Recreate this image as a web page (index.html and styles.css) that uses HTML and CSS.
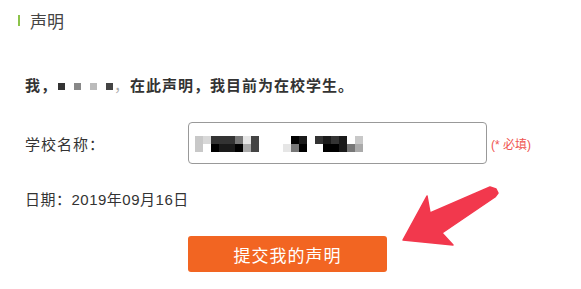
FILE: index.html
```html
<!DOCTYPE html>
<html>
<head>
  <title>声明</title>
  <meta charset="utf-8">
  <meta name="viewport" content="width=device-width, initial-scale=1.0">
  <link rel="stylesheet" href="styles.css">
</head>
<body>
  <div class="page">
    <div class="title">声明</div>

    <div class="statement">
      <span>我，</span>
      <span class="name-mask">
        <i class="sq sq1"></i><i class="sq sq2"></i><i class="sq sq3"></i><i class="sq sq4"></i>
      </span>
      <span class="light">，</span>
      <span>在此声明，我目前为在校学生。</span>
    </div>

    <div class="form-row">
      <label class="label">学校名称：</label>
      <div class="input-box">
        <div class="mosaic">
          <i class="m3"></i><i class="m2"></i><i class="m7"></i><i class="m7"></i><i class="m7"></i><i class="m5"></i><i class="m1"></i><i class="m6"></i>
          <i></i><i></i><i></i><i></i><i class="m9"></i><i class="m8"></i><i></i><i class="m7"></i><i class="m8"></i><i class="m7"></i><i class="m8"></i><i></i><i class="m3"></i>
          <i class="m3"></i><i></i><i class="m9"></i><i class="m8"></i><i class="m8"></i><i class="m9"></i><i class="m4"></i><i class="m6"></i>
          <i></i><i></i><i></i><i class="m1"></i><i class="m5"></i><i class="m9"></i><i></i><i></i><i class="m9"></i><i class="m9"></i><i class="m8"></i><i class="m5"></i><i class="m4"></i>
        </div>
      </div>
      <span class="required">(* 必填)</span>
    </div>

    <div class="date">日期：2019年09月16日</div>

    <button class="submit">提交我的声明</button>
  </div>

  <svg class="arrow" viewBox="390 180 191 70" width="191" height="70">
    <polygon points="403,240 427,196 430,213 490,187 496,189 498,193 495,197 442,233 453,245" fill="#f2384d" stroke="#f2384d" stroke-width="1.5" stroke-linejoin="round"/>
  </svg>
</body>
</html>
```

FILE: styles.css
```css
body {
  margin: 0;
  font-family: "Liberation Sans", "Noto Sans CJK SC", sans-serif;
  color: #333;
  background: #fff;
}
.page {
  position: relative;
  width: 581px;
  height: 289px;
}
.title {
  display: flex;
  align-items: center;
  padding: 9px 0 0 18px;
  height: 22px;
  font-size: 17px;
  color: #444;
}
.title::before {
  content: "";
  width: 2px;
  height: 11px;
  background: #8cc34a;
  margin-right: 10px;
}
.statement {
  display: flex;
  align-items: center;
  margin-top: 45px;
  padding-left: 25px;
  font-size: 15px;
  font-weight: bold;
  line-height: 20px;
  letter-spacing: 1px;
}
.name-mask {
  display: flex;
  gap: 9px;
  margin-left: 1px;
  width: 56px;
}
.sq {
  width: 7px;
  height: 7px;
}
.sq1 { background: #333; }
.sq2 { background: #888; }
.sq3 { background: #bbb; }
.sq4 { background: #444; }
.light {
  color: #aaa;
  font-weight: normal;
  width: 16px;
}
.form-row {
  display: flex;
  align-items: center;
  margin-top: 26px;
  padding-left: 25px;
}
.label {
  width: 163px;
  font-size: 15px;
  letter-spacing: 1px;
}
.input-box {
  width: 291px;
  height: 40px;
  border: 1px solid #999;
  border-radius: 4px;
  display: flex;
  align-items: center;
  padding-left: 6px;
}
.mosaic {
  display: grid;
  grid-template-columns: repeat(21, 8px);
  grid-auto-rows: 8px;
  margin-top: 2px;
}
.mosaic i { background: #fff; }
.mosaic .m1 { background: #e6e6e6; }
.mosaic .m2 { background: #d8d8d8; }
.mosaic .m3 { background: #c8c8c8; }
.mosaic .m4 { background: #aaa; }
.mosaic .m5 { background: #777; }
.mosaic .m6 { background: #444; }
.mosaic .m7 { background: #333; }
.mosaic .m8 { background: #1a1a1a; }
.mosaic .m9 { background: #000; }
.required {
  margin-left: 4px;
  font-size: 12px;
  color: #ef5350;
}
.date {
  margin-top: 26px;
  padding-left: 25px;
  font-size: 15px;
  line-height: 20px;
  letter-spacing: 0.5px;
}
.submit {
  display: block;
  margin: 26px 0 0 188px;
  width: 199px;
  height: 36px;
  border: none;
  border-radius: 3px;
  background: #f26522;
  color: #fff;
  font-family: "Liberation Sans", "Noto Sans CJK SC", sans-serif;
  font-size: 17px;
  letter-spacing: 1px;
}
.arrow {
  position: absolute;
  left: 390px;
  top: 180px;
}
```
